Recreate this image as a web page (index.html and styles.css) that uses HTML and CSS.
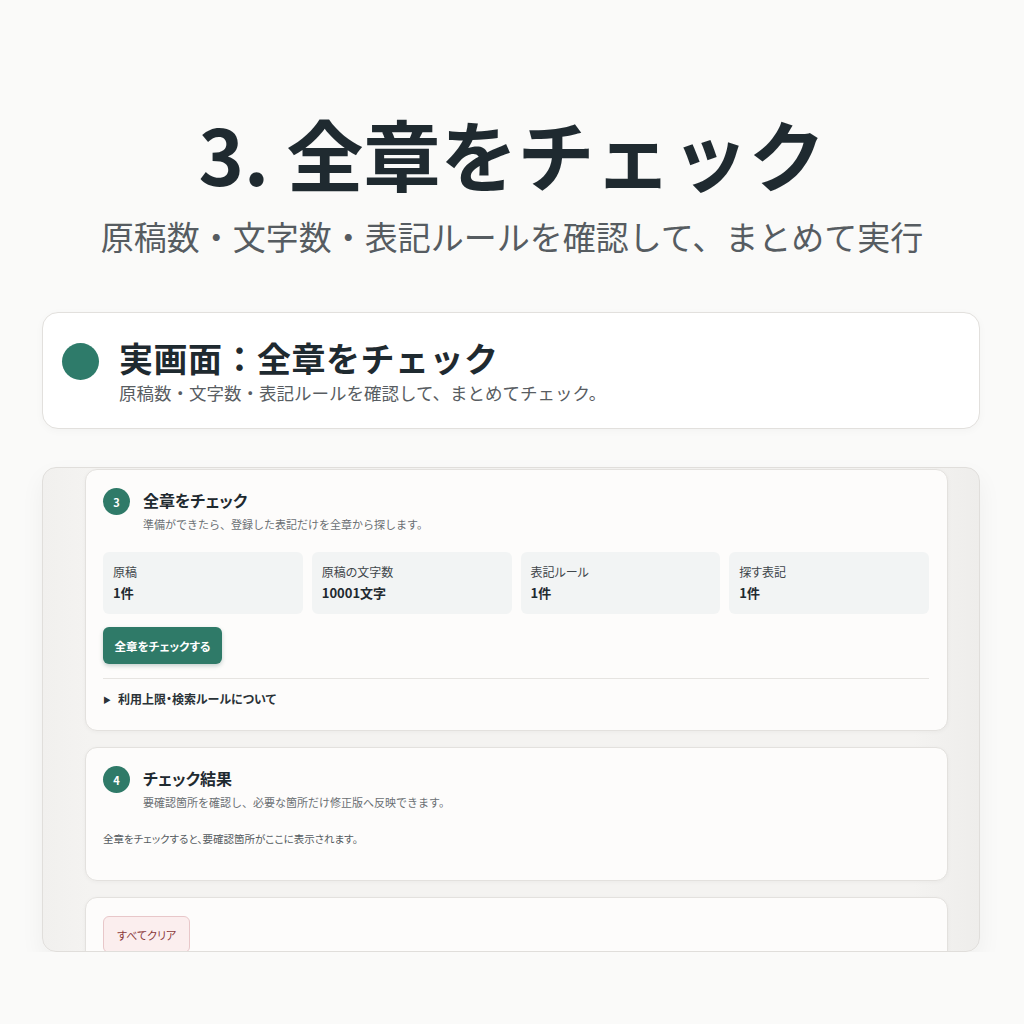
FILE: index.html
```html
<!DOCTYPE html>
<html lang="ja">
<head>
    <meta charset="UTF-8">
    <meta name="viewport" content="width=device-width, initial-scale=1.0">
    <title>全章をチェック</title>
    <link rel="stylesheet" href="styles.css">
</head>
<body>

    <header class="hero">
        <h1>3. 全章をチェック</h1>
        <p>原稿数・文字数・表記ルールを確認して、まとめて実行</p>
    </header>

    <section class="intro-card">
        <span class="dot"></span>
        <div>
            <h2>実画面：全章をチェック</h2>
            <p>原稿数・文字数・表記ルールを確認して、まとめてチェック。</p>
        </div>
    </section>

    <div class="frame">
        <div class="panel">
            <div class="step-head">
                <span class="badge">3</span>
                <div>
                    <h3>全章をチェック</h3>
                    <p class="step-desc">準備ができたら、登録した表記だけを全章から探します。</p>
                </div>
            </div>

            <div class="stats">
                <div class="stat">
                    <span class="stat-label">原稿</span>
                    <strong>1件</strong>
                </div>
                <div class="stat">
                    <span class="stat-label">原稿の文字数</span>
                    <strong>10001文字</strong>
                </div>
                <div class="stat">
                    <span class="stat-label">表記ルール</span>
                    <strong>1件</strong>
                </div>
                <div class="stat">
                    <span class="stat-label">探す表記</span>
                    <strong>1件</strong>
                </div>
            </div>

            <button class="primary-btn">全章をチェックする</button>

            <details class="notes">
                <summary>利用上限・検索ルールについて</summary>
            </details>
        </div>

        <div class="panel result">
            <div class="step-head">
                <span class="badge">4</span>
                <div>
                    <h3>チェック結果</h3>
                    <p class="step-desc">要確認箇所を確認し、必要な箇所だけ修正版へ反映できます。</p>
                </div>
            </div>
            <p class="empty">全章をチェックすると、要確認箇所がここに表示されます。</p>
        </div>

        <div class="panel clear-panel">
            <button class="clear-btn">すべてクリア</button>
        </div>
    </div>

</body>
</html>
```

FILE: styles.css
```css
body {
    margin: 0;
    background: #fafaf9;
    font-family: "Noto Sans CJK JP", "Noto Sans", sans-serif;
    color: #1f2a30;
}
.hero {
    text-align: center;
    padding-top: 98px;
}
.hero h1 {
    margin: 0;
    font-size: 77px;
    font-weight: 700;
    line-height: 110px;
}
.hero p {
    margin: 4px 0 0;
    font-size: 33px;
    line-height: 48px;
    color: #565c61;
}
.intro-card {
    margin: 52px 44px 0 42px;
    height: 117px;
    box-sizing: border-box;
    background: #fff;
    border: 1px solid #e2e0dd;
    border-radius: 16px;
    display: flex;
    align-items: center;
    gap: 20px;
    padding: 0 0 2px 19px;
    box-shadow: 0 2px 8px rgba(0, 0, 0, 0.03);
}
.dot {
    width: 37px;
    height: 37px;
    border-radius: 50%;
    background: #2e7b6a;
    flex: none;
    margin-bottom: 16px;
}
.intro-card h2 {
    margin: 0;
    font-size: 34px;
    line-height: 44px;
    font-weight: 700;
    letter-spacing: 0.5px;
}
.intro-card p {
    margin: 2px 0 0;
    font-size: 17.5px;
    line-height: 22px;
    color: #585d62;
}
.frame {
    margin: 38px 44px 0 42px;
    height: 485px;
    box-sizing: border-box;
    overflow: hidden;
    border: 1px solid #e0dedb;
    border-radius: 14px;
    background: linear-gradient(to right, #f1f0ee, #f4f3f1 5%, #f4f3f1 93%, #eeedeb);
    padding: 1px 31px 0 42px;
    display: flex;
    flex-direction: column;
    gap: 16px;
    box-shadow: 0 10px 24px rgba(0, 0, 0, 0.05);
}
.panel {
    background: #fdfcfb;
    border: 1px solid #e3e1de;
    border-radius: 12px;
    padding: 18px 18px 22px 17px;
    flex: none;
    box-shadow: 0 1px 4px rgba(0, 0, 0, 0.04);
}
.step-head {
    display: flex;
    gap: 13px;
    align-items: flex-start;
}
.badge {
    width: 27px;
    height: 27px;
    border-radius: 50%;
    background: #2f7a68;
    color: #fff;
    font-size: 11px;
    font-weight: 700;
    display: flex;
    align-items: center;
    justify-content: center;
    flex: none;
}
.step-head h3 {
    margin: 0;
    font-size: 16px;
    line-height: 24px;
    font-weight: 700;
    font-feature-settings: "palt";
}
.step-desc {
    margin: 3px 0 0;
    font-size: 11px;
    line-height: 18px;
    color: #6a6f73;
}
.stats {
    display: grid;
    grid-template-columns: repeat(4, 1fr);
    gap: 9px;
    margin-top: 19px;
}
.stat {
    background: #f2f4f4;
    border-radius: 6px;
    height: 62px;
    box-sizing: border-box;
    padding: 11px 10px 0;
    display: flex;
    flex-direction: column;
    gap: 4px;
}
.stat-label {
    font-size: 12px;
    line-height: 17px;
    color: #3f464b;
    font-feature-settings: "palt";
}
.stat strong {
    font-size: 13px;
    line-height: 18px;
    font-weight: 700;
}
.primary-btn {
    margin-top: 13px;
    width: 119px;
    height: 37px;
    border: none;
    border-radius: 6px;
    background: #2f7a68;
    color: #fff;
    font-family: inherit;
    font-size: 11.5px;
    font-weight: 700;
    font-feature-settings: "palt";
    box-shadow: 0 2px 4px rgba(30, 80, 70, 0.25);
}
.notes {
    margin-top: 14px;
    border-top: 1px solid #e6e4e1;
    padding-top: 12px;
    font-size: 12px;
    font-weight: 700;
    color: #2a3237;
    font-feature-settings: "palt";
}
.notes summary {
    list-style: none;
    line-height: 16px;
}
.notes summary::before {
    content: "\25B6";
    font-size: 8px;
    margin-right: 7px;
    vertical-align: 1px;
}
.result {
    padding-bottom: 33px;
}
.empty {
    margin: 20px 0 0;
    font-size: 10.5px;
    line-height: 16px;
    color: #555b60;
    font-feature-settings: "palt";
}
.clear-panel {
    padding-top: 18px;
}
.clear-btn {
    height: 37px;
    padding: 0 13px;
    border: 1px solid #e8c7c9;
    border-radius: 6px;
    background: #fbeeee;
    color: #8b3b3b;
    font-family: inherit;
    font-size: 11px;
    font-feature-settings: "palt";
}
```
